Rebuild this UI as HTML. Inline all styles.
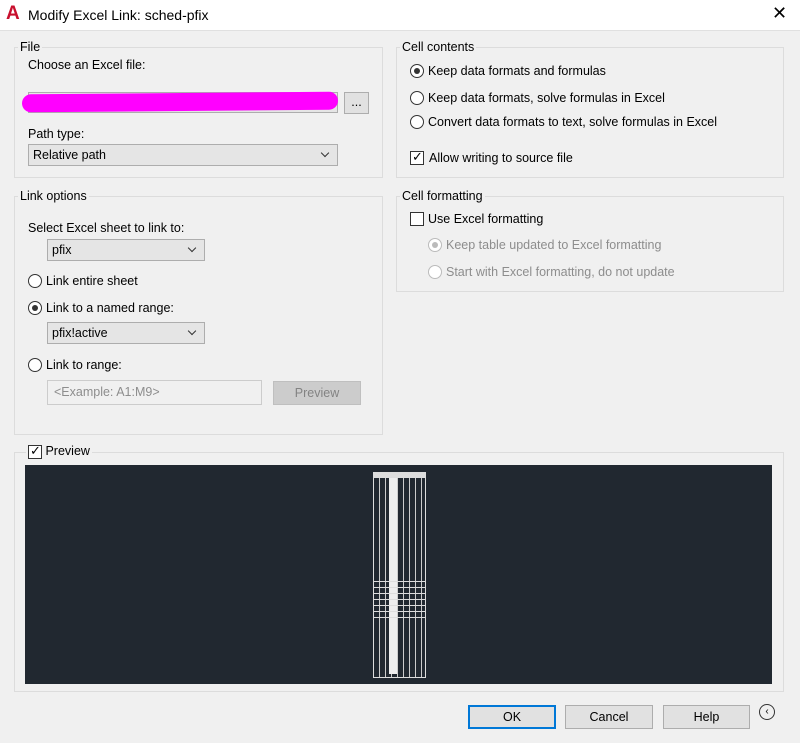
<!DOCTYPE html><html><head><style>
*{box-sizing:border-box}body{margin:0;width:800px;height:743px;background:#f0f0f0;font-family:"Liberation Sans",sans-serif;font-size:12.5px;color:#000;position:relative;overflow:hidden}
.a{position:absolute}
.title{left:0;top:0;width:800px;height:31px;background:#fff;border-bottom:1px solid #e0e0e0}
.g{position:absolute;border:1px solid #dcdcdc}
.lg{position:absolute;background:#f0f0f0;padding:0 2px}
.combo{position:absolute;border:1px solid #adadad;background:#e5e5e5;height:22px;padding:3px 4px}
.combo:after{content:"";position:absolute;right:9px;top:5px;width:5px;height:5px;border-right:1px solid #333;border-bottom:1px solid #333;transform:rotate(45deg)}
.rb{position:absolute;width:14px;height:14px;border:1px solid #333;border-radius:50%;background:#fff}
.rb.on:after{content:"";position:absolute;left:3px;top:3px;width:6px;height:6px;border-radius:50%;background:#333}
.rb.dis{border-color:#bbb}.rb.dis.on:after{background:#bbb}
.cb{position:absolute;width:14px;height:14px;border:1px solid #333;background:#fff}
.btn{position:absolute;border:1px solid #adadad;background:#e1e1e1;height:24px;text-align:center;line-height:22px}
.dis{color:#8d8d8d}
</style></head><body>
<div class="a title"></div>
<div class="a" style="left:6px;top:5px;width:16px;height:18px;color:#c8102e;font-weight:bold;font-size:19px;line-height:18px">A</div>
<div class="a" style="left:28px;top:7px;font-size:14px">Modify Excel Link: sched-pfix</div>
<div class="a" style="left:772px;top:3px;font-size:18px;font-weight:300">✕</div>

<div class="g" style="left:14px;top:47px;width:369px;height:131px"></div><div class="lg" style="left:18px;top:40px">File</div>
<div class="a" style="left:28px;top:58px">Choose an Excel file:</div>
<div class="a" style="left:28px;top:92px;width:310px;height:21px;border:1px solid #adadad;background:#e5e5e5"></div>
<div class="a" style="left:22px;top:93px;width:316px;height:18px;background:#f0f;border-radius:9px;transform:rotate(-0.5deg)"></div>
<div class="btn" style="left:344px;top:92px;width:25px;height:22px;line-height:18px">...</div>
<div class="a" style="left:28px;top:127px">Path type:</div>
<div class="combo" style="left:28px;top:144px;width:310px">Relative path</div>

<div class="g" style="left:396px;top:47px;width:388px;height:131px"></div><div class="lg" style="left:400px;top:40px">Cell contents</div>
<div class="rb on" style="left:410px;top:64px"></div><div class="a" style="left:428px;top:64px">Keep data formats and formulas</div>
<div class="rb" style="left:410px;top:91px"></div><div class="a" style="left:428px;top:91px">Keep data formats, solve formulas in Excel</div>
<div class="rb" style="left:410px;top:115px"></div><div class="a" style="left:428px;top:115px">Convert data formats to text, solve formulas in Excel</div>
<div class="cb" style="left:410px;top:151px"><div class="a" style="left:1px;top:-3px;font-size:13px">✓</div></div><div class="a" style="left:429px;top:151px">Allow writing to source file</div>

<div class="g" style="left:14px;top:196px;width:369px;height:239px"></div><div class="lg" style="left:18px;top:189px">Link options</div>
<div class="a" style="left:28px;top:221px">Select Excel sheet to link to:</div>
<div class="combo" style="left:47px;top:239px;width:158px">pfix</div>
<div class="rb" style="left:28px;top:274px"></div><div class="a" style="left:46px;top:274px">Link entire sheet</div>
<div class="rb on" style="left:28px;top:301px"></div><div class="a" style="left:46px;top:301px">Link to a named range:</div>
<div class="combo" style="left:47px;top:322px;width:158px">pfix!active</div>
<div class="rb" style="left:28px;top:358px"></div><div class="a" style="left:46px;top:358px">Link to range:</div>
<div class="a dis" style="left:47px;top:380px;width:215px;height:25px;border:1px solid #ccc;padding:4px 6px">&lt;Example: A1:M9&gt;</div>
<div class="btn dis" style="left:273px;top:381px;width:88px;border-color:#bfbfbf;background:#ccc;color:#838383">Preview</div>

<div class="g" style="left:396px;top:196px;width:388px;height:96px"></div><div class="lg" style="left:400px;top:189px">Cell formatting</div>
<div class="cb" style="left:410px;top:212px"></div><div class="a" style="left:428px;top:212px">Use Excel formatting</div>
<div class="rb dis on" style="left:428px;top:238px"></div><div class="a dis" style="left:446px;top:238px">Keep table updated to Excel formatting</div>
<div class="rb dis" style="left:428px;top:265px"></div><div class="a dis" style="left:446px;top:265px">Start with Excel formatting, do not update</div>

<div class="g" style="left:14px;top:452px;width:770px;height:240px"></div>
<div class="lg" style="left:26px;top:444px;padding-left:2px"><span style="display:inline-block;width:14px"></span> Preview</div>
<div class="cb" style="left:28px;top:445px"><div class="a" style="left:1px;top:-3px;font-size:13px">✓</div></div>
<div class="a" style="left:25px;top:465px;width:747px;height:219px;background:#212830"></div>
<div class="a" style="left:373px;top:472px;width:53px;height:206px;border:1px solid #ddd;background:repeating-linear-gradient(90deg,transparent 0 5px,#ccc 5px 6px)"></div>
<div class="a" style="left:389px;top:478px;width:8px;height:196px;background:#eee"></div>
<div class="a" style="left:373px;top:576px;width:53px;height:44px;background:repeating-linear-gradient(180deg,transparent 0 5px,#ddd 5px 6px)"></div>
<div class="a" style="left:373px;top:472px;width:53px;height:6px;background:#ddd"></div>

<div class="btn" style="left:468px;top:705px;width:88px;border:2px solid #0078d7;line-height:20px">OK</div>
<div class="btn" style="left:565px;top:705px;width:88px">Cancel</div>
<div class="btn" style="left:663px;top:705px;width:87px">Help</div>
<div class="a" style="left:759px;top:704px;width:16px;height:16px;border:1px solid #333;border-radius:50%;font-size:10px;line-height:14px;text-align:center">‹</div>
</body></html>
